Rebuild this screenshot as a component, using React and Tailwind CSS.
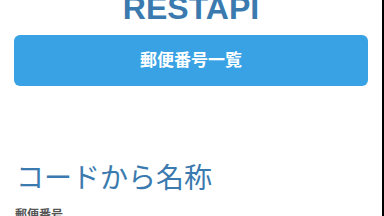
export default function App() {
  return (
    <div className="flex h-[216px] w-[384px] overflow-hidden bg-white font-['Liberation_Sans','Noto_Sans_CJK_JP',sans-serif]">
      <div className="flex-1 px-[14px]">
        <h1 className="-mt-[10px] text-center text-[32px] font-bold leading-[36px] text-[#3a7aaf]">RESTAPI</h1>
        <button
          type="button"
          className="mt-[9px] flex h-[51px] w-full items-center justify-center rounded-[6px] bg-[#38a2e4] text-[17px] font-bold text-white"
        >
          郵便番号一覧
        </button>
        <h2 className="mt-[77px] pl-[2px] text-[28px] leading-[32px] text-[#3a7aaf]">コードから名称</h2>
        <label className="mt-[12px] block pl-[1px] text-[12px] font-bold leading-[16px] text-[#555]">郵便番号</label>
      </div>
      <div className="w-[2px] bg-black" />
    </div>
  );
}
